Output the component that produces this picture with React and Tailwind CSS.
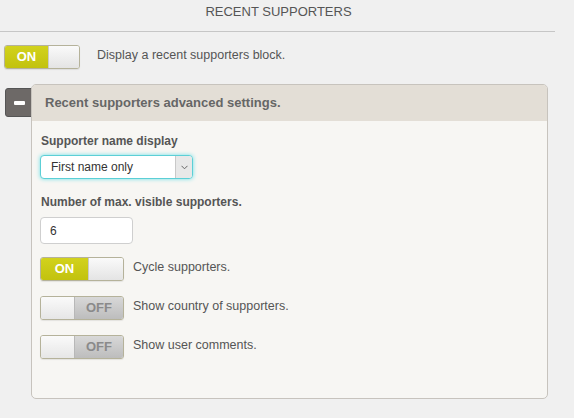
// App.jsx
// Recent supporters settings panel

import React from 'react';

const Toggle = ({ on, wide }) => {
  const w = wide ? 'w-[84px]' : 'w-[76px]';
  return (
    <span className={`${w} h-[24px] inline-flex shrink-0 rounded-[3px] border border-[#b5b29a] overflow-hidden shadow-[0_1px_1px_rgba(0,0,0,0.08)]`}>
      {on ? (
        <>
          <span className={`${wide ? 'w-[47px]' : 'w-[43px]'} h-full inline-flex items-center justify-center bg-gradient-to-b from-[#d2d21c] to-[#c2c20e] text-white text-[13px] font-bold`}>ON</span>
          <span className="flex-1 h-full bg-gradient-to-b from-[#fafafa] to-[#e4e4e4] border-l border-[#c9c9c9]" />
        </>
      ) : (
        <>
          <span className="w-[34px] h-full bg-gradient-to-b from-[#fafafa] to-[#e6e6e6] border-r border-[#b8b8b8]" />
          <span className="flex-1 h-full inline-flex items-center justify-center bg-gradient-to-b from-[#d8d8d8] to-[#bdbdbd] text-[#8a8a8a] text-[13px] font-bold">OFF</span>
        </>
      )}
    </span>
  );
};

const ToggleRow = ({ on, label }) => (
  <div className="flex items-center gap-[9px]">
    <Toggle on={on} wide />
    <span className="text-[12.5px] text-[#555] -mt-[3px]">{label}</span>
  </div>
);

export default function App() {
  return (
    <div className="w-[574px] h-[418px] bg-[#f0f0f0] overflow-hidden font-['Liberation_Sans',Arial,sans-serif]">
      {/* Title */}
      <div className="w-[555px] h-[32px] border-b border-[#c6c6c6] flex items-center justify-center pb-[7px] pl-[2px]">
        <span className="text-[13px] text-[#555]">RECENT SUPPORTERS</span>
      </div>

      {/* Main toggle */}
      <div className="flex items-center gap-[17px] pl-[4px] mt-[13px]">
        <Toggle on />
        <span className="text-[12.5px] text-[#555] -mt-[3px]">Display a recent supporters block.</span>
      </div>

      {/* Advanced settings */}
      <div className="flex mt-[15px] pl-[5px]">
        <div className="w-[28px] h-[29px] mt-[4px] bg-[#6d6967] border border-[#555] rounded-l-[3px] flex items-center justify-center">
          <span className="w-[11px] h-[4px] bg-white rounded-[1px]" />
        </div>
        <div className="w-[517px] h-[315px] -ml-[2px] rounded-[5px] border border-[#c7c3bd] bg-[#f7f6f3] overflow-hidden">
          <div className="h-[36px] bg-[#e3ded6] flex items-center pl-[13px]">
            <span className="text-[13px] font-bold text-[#666]">Recent supporters advanced settings.</span>
          </div>

          <div className="pl-[8px] pt-[11px] flex flex-col">
            <span className="pl-[1px] text-[12px] font-bold text-[#555]">Supporter name display</span>
            <div className="mt-[5px] w-[153px] h-[24px] rounded-[4px] border border-[#5ccfd6] bg-white shadow-[0_0_4px_#6fe0e6] flex items-center">
              <span className="flex-1 pl-[10px] text-[12px] text-[#333]">First name only</span>
              <span className="w-[17px] h-full border-l border-[#c9c9c9] bg-[#e8e8e8] rounded-r-[3px] flex items-center justify-center">
                <svg width="7" height="5" viewBox="0 0 7 5"><path d="M0.5 0.8 L3.5 3.8 L6.5 0.8" fill="none" stroke="#666" strokeWidth="1" /></svg>
              </span>
            </div>

            <span className="mt-[14px] pl-[1px] text-[12px] font-bold text-[#555]">Number of max. visible supporters.</span>
            <div className="mt-[6px] w-[93px] h-[27px] rounded-[4px] border border-[#cfcfcf] bg-white flex items-center pl-[9px]">
              <span className="text-[12px] text-[#333]">6</span>
            </div>

            <div className="mt-[13px] flex flex-col gap-[15px]">
              <ToggleRow on label="Cycle supporters." />
              <ToggleRow label="Show country of supporters." />
              <ToggleRow label="Show user comments." />
            </div>
          </div>
        </div>
      </div>
    </div>
  );
}
